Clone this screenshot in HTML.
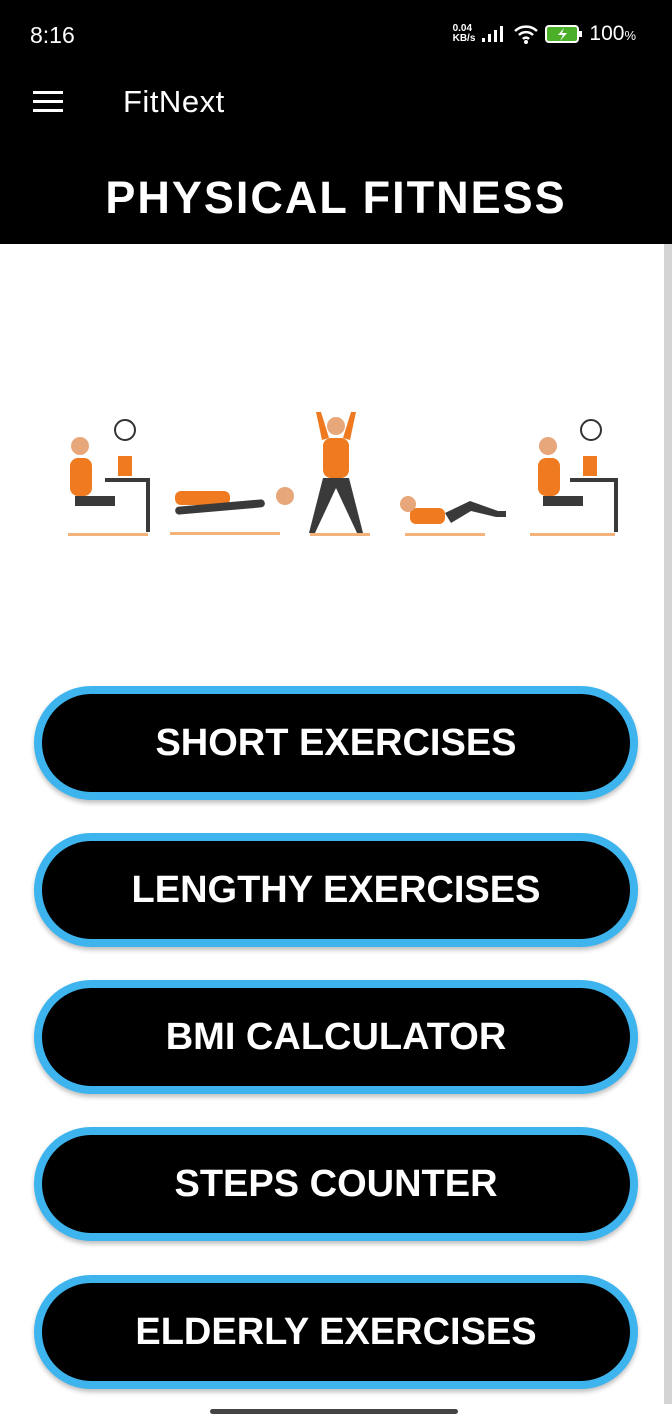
<!DOCTYPE html>
<html><head><meta charset="utf-8"><style>
*{margin:0;padding:0;box-sizing:border-box}
body{width:672px;height:1420px;background:#fff;font-family:"Liberation Sans",sans-serif;position:relative;overflow:hidden}
.hdr{position:absolute;left:0;top:0;width:672px;height:244px;background:#000;color:#fff}
.t{position:absolute;left:30px;top:22px;font-size:23px}
.st{position:absolute;right:36px;top:22px;font-size:21px;display:flex;align-items:center;gap:6px}
.ham{position:absolute;left:33px;top:91px;width:30px}
.ham i{display:block;height:3px;background:#fff;margin-bottom:6px}
.app{position:absolute;left:123px;top:84px;font-size:31px;letter-spacing:0.5px}
.title{position:absolute;left:0;width:672px;top:172px;text-align:center;font-size:45px;font-weight:bold;letter-spacing:2px}
.sb{position:absolute;left:664px;top:244px;width:8px;height:1160px;background:#d4d4d4}
.btn{position:absolute;left:34px;width:604px;height:114px;border:8px solid #3db4ee;border-radius:57px;background:#000;color:#fff;font-weight:bold;font-size:38px;display:flex;align-items:center;justify-content:center;box-shadow:0 3px 5px rgba(0,0,0,.25)}
.nav{position:absolute;left:210px;top:1409px;width:248px;height:5px;border-radius:3px;background:#444}
</style></head><body>
<div class="hdr">
<div class="t">8:16</div>
<div class="st"><span style="font-size:10px;line-height:10px;font-weight:bold">0.04<br>KB/s</span>
<svg width="26" height="18"><rect x="1" y="13" width="3" height="4" fill="#fff"/><rect x="7" y="9" width="3" height="8" fill="#fff"/><rect x="13" y="5" width="3" height="12" fill="#fff"/><rect x="19" y="1" width="3" height="16" fill="#fff"/></svg>
<svg width="26" height="20"><path d="M2 7a16 16 0 0 1 22 0M6 11a10 10 0 0 1 14 0M10 15a4 4 0 0 1 6 0" stroke="#fff" stroke-width="2.5" fill="none"/><circle cx="13" cy="18" r="2" fill="#fff"/></svg>
<svg width="38" height="20"><rect x="1" y="2" width="32" height="16" rx="3" fill="#4caf2a" stroke="#fff" stroke-width="2"/><rect x="34" y="7" width="3" height="6" fill="#fff"/><path d="M19 4l-6 7h5l-3 6 7-8h-5z" fill="#fff"/></svg>
<span>100<span style="font-size:13px">%</span></span></div>
<div class="ham"><i></i><i></i><i></i></div>
<div class="app">FitNext</div>
<div class="title">PHYSICAL FITNESS</div>
</div>
<div class="sb"></div>
<svg style="position:absolute;left:60px;top:408px" width="560" height="135">
<g fill="#f07a1f">
<rect x="10" y="50" width="22" height="38" rx="8"/><circle cx="20" cy="38" r="9" fill="#e8a77a"/>
<rect x="115" y="83" width="55" height="14" rx="6"/><circle cx="225" cy="88" r="9" fill="#e8a77a"/>
<rect x="263" y="30" width="26" height="40" rx="8"/><circle cx="276" cy="18" r="9" fill="#e8a77a"/>
<rect x="350" y="100" width="35" height="16" rx="6"/><circle cx="348" cy="96" r="8" fill="#e8a77a"/>
<rect x="478" y="50" width="22" height="38" rx="8"/><circle cx="488" cy="38" r="9" fill="#e8a77a"/>
<rect x="58" y="48" width="14" height="20"/><rect x="523" y="48" width="14" height="20"/>
<path d="M262 32l-6-28h5l8 26zM290 32l6-28h-5l-8 26z"/>
</g>
<g fill="#3a3a3a">
<rect x="15" y="88" width="40" height="10"/><rect x="115" y="95" width="90" height="8" rx="4" transform="rotate(-5 160 99)"/>
<path d="M263 70l-14 55h6l21-45 21 45h6l-14-55z"/>
<path d="M385 105l25-12 28 10h8v6h-10l-25-6-20 12z"/>
<rect x="483" y="88" width="40" height="10"/>
<rect x="86" y="72" width="4" height="52"/><rect x="554" y="72" width="4" height="52"/>
<rect x="45" y="70" width="45" height="4"/><rect x="510" y="70" width="48" height="4"/>
</g>
<circle cx="65" cy="22" r="10" fill="#fff" stroke="#333" stroke-width="2"/><circle cx="531" cy="22" r="10" fill="#fff" stroke="#333" stroke-width="2"/>
<g fill="#f3b27a"><rect x="8" y="125" width="80" height="3"/><rect x="110" y="124" width="110" height="3"/><rect x="250" y="125" width="60" height="3"/><rect x="345" y="125" width="80" height="3"/><rect x="470" y="125" width="85" height="3"/></g>
</svg>
<div class="btn" style="top:686px">SHORT EXERCISES</div>
<div class="btn" style="top:833px">LENGTHY EXERCISES</div>
<div class="btn" style="top:980px">BMI CALCULATOR</div>
<div class="btn" style="top:1127px">STEPS COUNTER</div>
<div class="btn" style="top:1275px">ELDERLY EXERCISES</div>
<div class="nav"></div>
</body></html>
